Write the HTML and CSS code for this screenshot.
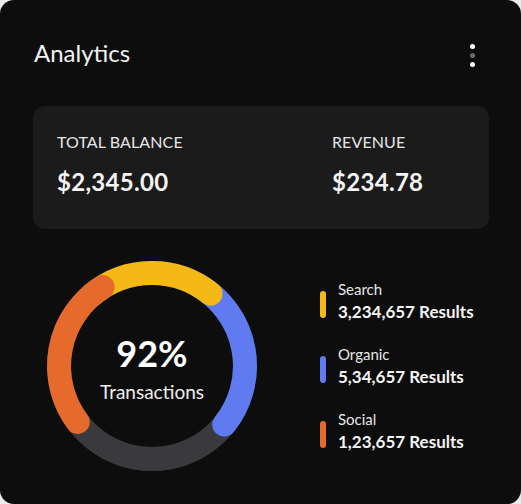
FILE: index.html
```html
<!DOCTYPE html>
<html>
<head>
<meta charset="utf-8">
<link rel="stylesheet" href="styles.css">
</head>
<body>
<div class="card">
  <div class="header">
    <h1 class="title">Analytics</h1>
    <div class="kebab"><span class="dot"></span><span class="dot dim"></span><span class="dot"></span></div>
  </div>
  <div class="panel">
    <div class="stat">
      <div class="label">TOTAL BALANCE</div>
      <div class="value">$2,345.00</div>
    </div>
    <div class="stat">
      <div class="label">REVENUE</div>
      <div class="value">$234.78</div>
    </div>
  </div>
  <div class="bottom">
    <div class="donut">
      <svg class="ring" width="220" height="220" viewBox="0 0 220 220">
        <circle cx="110" cy="110" r="93" fill="none" stroke="#3a3a3e" stroke-width="24"/>
        <path d="M156.5 29.46 A93 93 0 0 1 182.27 168.53" fill="none" stroke="#5f7bef" stroke-width="24" stroke-linecap="round"/>
        <path d="M50.22 38.76 A93 93 0 0 1 168.53 37.73" fill="none" stroke="#f4b817" stroke-width="24" stroke-linecap="round"/>
        <path d="M35.73 165.97 A93 93 0 0 1 60.72 31.14" fill="none" stroke="#e66a2c" stroke-width="24" stroke-linecap="round"/>
      </svg>
      <div class="center">
        <div class="pct">92%</div>
        <div class="caption">Transactions</div>
      </div>
    </div>
    <ul class="legend">
      <li class="item"><span class="bar yellow"></span><div><div class="name">Search</div><div class="count">3,234,657 Results</div></div></li>
      <li class="item"><span class="bar blue"></span><div><div class="name">Organic</div><div class="count">5,34,657 Results</div></div></li>
      <li class="item"><span class="bar orange"></span><div><div class="name">Social</div><div class="count">1,23,657 Results</div></div></li>
    </ul>
  </div>
</div>
</body>
</html>
```
FILE: styles.css
```css
* { box-sizing: border-box; }
html, body { margin: 0; padding: 0; }
body {
  background: #ececec;
  font-family: "Lato", "Inter", sans-serif;
  color: #fff;
}
.card {
  width: 521px;
  height: 504px;
  background: #0d0d0d;
  border-radius: 14px;
  padding: 0 32px 0 33px;
  overflow: hidden;
}
.header {
  display: flex;
  align-items: center;
  justify-content: space-between;
  padding-top: 38px;
  height: 68px;
}
.title {
  margin: 0 0 0 1px;
  font-size: 24px;
  line-height: 30px;
  font-weight: 400;
  color: #f2f2f2;
}
.kebab {
  display: flex;
  flex-direction: column;
  gap: 4px;
  margin-right: 14px;
  margin-top: 4px;
}
.dot {
  width: 5px;
  height: 5px;
  border-radius: 50%;
  background: #fff;
}
.dot.dim { background: #6a6a6a; }
.panel {
  margin-top: 38px;
  height: 123px;
  background: #1b1b1b;
  border-radius: 12px;
  padding: 26px 24px 0 24px;
  display: grid;
  grid-template-columns: 275px 1fr;
}
.label {
  font-size: 16px;
  line-height: 20px;
  color: #e6e6e6;
  letter-spacing: 0.1px;
}
.value {
  margin-top: 15px;
  font-size: 24px;
  line-height: 30px;
  font-weight: 700;
  color: #f5f5f5;
  letter-spacing: 0.3px;
}
.bottom {
  display: flex;
  margin-top: 27px;
}
.donut {
  display: grid;
  margin-left: 9px;
  width: 220px;
  height: 220px;
}
.ring, .center { grid-area: 1 / 1; }
.center {
  display: flex;
  flex-direction: column;
  align-items: center;
  justify-content: center;
  padding-top: 4px;
}
.pct {
  font-size: 36px;
  line-height: 40px;
  font-weight: 700;
}
.caption {
  margin-top: 7px;
  font-size: 19px;
  line-height: 24px;
  color: #eee;
}
.legend {
  list-style: none;
  margin: 24px 0 0 58px;
  padding: 0;
  display: flex;
  flex-direction: column;
  gap: 23px;
}
.item {
  display: flex;
  align-items: center;
  gap: 12px;
}
.bar {
  width: 6px;
  height: 27px;
  border-radius: 3px;
  margin-top: 6px;
}
.bar.yellow { background: #f4b817; }
.bar.blue { background: #5f7bef; }
.bar.orange { background: #e66a2c; }
.name {
  font-size: 15px;
  line-height: 19px;
  color: #e6e6e6;
}
.count {
  margin-top: 3px;
  font-size: 17px;
  line-height: 20px;
  font-weight: 700;
  color: #f5f5f5;
}
```
